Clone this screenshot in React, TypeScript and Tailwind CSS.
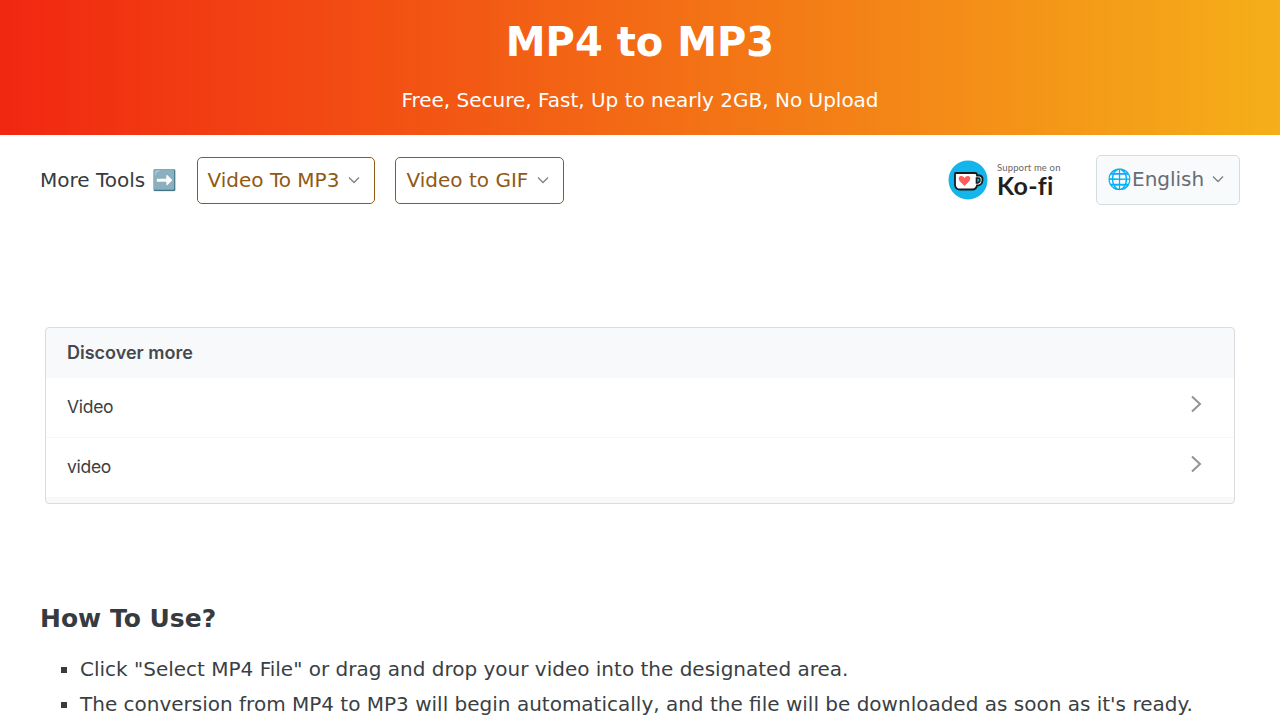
import React from "react";

const Chevron = ({ className }: { className: string }) => (
  <svg viewBox="0 0 12 8" fill="none" stroke="currentColor" strokeWidth="1.3" className={className}>
    <path d="M1 1.5 L6 6.5 L11 1.5" />
  </svg>
);

const Row = ({ label }: { label: string }) => (
  <div className="flex h-[60px] items-center justify-between border-b border-[#f6f7f8] pl-[21px] pr-[32px]">
    <span className="font-['Inter',sans-serif] text-[17.5px] tracking-[-0.3px] text-[#3c4043]">{label}</span>
    <svg viewBox="0 0 12 18" fill="none" stroke="#8f9498" strokeWidth="2" className="mb-2 h-[18px] w-[12px]">
      <path d="M2 1.5 L10 9 L2 16.5" />
    </svg>
  </div>
);

export default function App() {
  return (
    <div className="h-[720px] overflow-hidden bg-white font-['DejaVu_Sans',sans-serif] text-[#363b40]">
      <header className="flex h-[135px] flex-col items-center bg-linear-to-r/srgb from-[#f12711] to-[#f5af19] text-white">
        <h1 className="mt-[18px] text-[40px] font-bold leading-[48px]">MP4 to MP3</h1>
        <p className="mt-[22px] text-[20px] leading-[24px]">Free, Secure, Fast, Up to nearly 2GB, No Upload</p>
      </header>

      <div className="flex h-[90px] items-center justify-between px-10">
        <div className="flex items-center gap-5">
          <span className="text-[20px]">More Tools ➡️</span>
          <button className="flex h-[47px] w-[178px] items-center gap-[9px] rounded-[5px] border border-[#8f5a14] pl-[10px] text-[20px] text-[#8f5a14]">
            Video To MP3
            <Chevron className="h-2 w-3 text-[#7b8288]" />
          </button>
          <button className="flex h-[47px] w-[169px] items-center gap-[9px] rounded-[5px] border border-[#8f5a14] pl-[11px] text-[20px] text-[#8f5a14]">
            Video to GIF
            <Chevron className="h-2 w-3 text-[#7b8288]" />
          </button>
        </div>
        <div className="flex items-center gap-[35px]">
          <div className="flex items-center gap-[9px]">
            <svg viewBox="0 0 40 40" className="h-10 w-10">
              <circle cx="20" cy="20" r="19.5" fill="#13b5ea" />
              <path d="M7 13 H27 Q29 13 29 15 V15.5 H31.5 Q35 16 34.5 20.5 Q34 25.5 29 25.5 Q28 29.5 24.5 29.5 H12 Q7.5 29.5 7 25 V14 Q7 13 7.5 13 Z" fill="#fff" stroke="#1a1a1a" strokeWidth="1.8" />
              <path d="M16.5 26 L11.5 21 Q9.5 17 12.5 16 Q15 15.5 16.5 18 Q18 15.5 20.5 16 Q23.5 17 21.5 21 Z" fill="#ff5e5b" />
              <path d="M28.5 18 H31 Q32.3 18.5 32 20.5 Q31.5 23 28.5 23 Z" fill="#13b5ea" stroke="#1a1a1a" strokeWidth="1.6" />
            </svg>
            <div className="flex w-[64px] flex-col font-['Lato',sans-serif] text-[#1f1f1f]">
              <span className="-mt-[3px] text-[9.5px] leading-[11px] tracking-[0.15px] text-[#666]">Support me on</span>
              <span className="mt-[1px] text-[25px] font-bold leading-[22px] tracking-[0.3px] [font-variant-ligatures:none]">Ko-fi</span>
            </div>
          </div>
          <button className="flex h-[50px] w-[144px] items-center rounded-[5px] border border-[#d3dce0] bg-[#f8fafb] pb-[2px] pl-[10px] text-[20px] text-[#666d75]">
            🌐English
            <Chevron className="ml-[8px] h-2 w-3 text-[#7b8288]" />
          </button>
        </div>
      </div>

      <div className="mx-[45px] mt-[102px] h-[177px] overflow-hidden rounded-[4px] border border-[#dadce0] bg-[#f8f9fa]">
        <div className="flex h-[50px] items-center pb-[1px] pl-[21px] font-['Inter',sans-serif] text-[18px] font-semibold text-[#46494d]">Discover more</div>
        <div className="bg-white">
          <Row label="Video" />
          <Row label="video" />
        </div>
      </div>

      <h2 className="ml-10 mt-[99px] text-[25px] font-bold leading-[32px]">How To Use?</h2>
      <ul className="mx-10 mt-[17px] list-[square] pl-10 text-[20px] leading-[35px] text-[#3a3f44] marker:text-[#363b40]">
        <li>Click "Select MP4 File" or drag and drop your video into the designated area.</li>
        <li>The conversion from MP4 to MP3 will begin automatically, and the file will be downloaded as soon as it's ready.</li>
      </ul>
    </div>
  );
}
